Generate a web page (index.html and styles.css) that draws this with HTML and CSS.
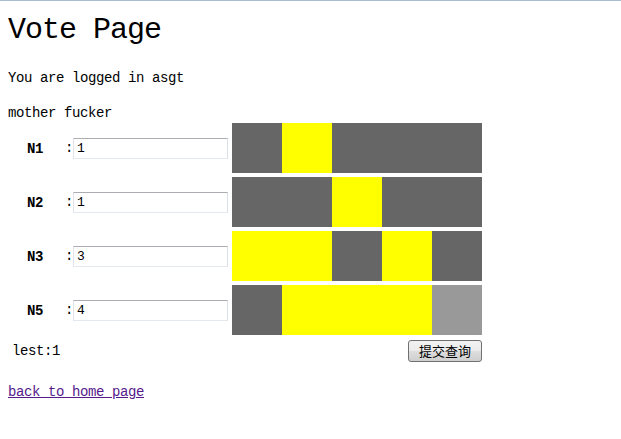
FILE: index.html
```html
<!DOCTYPE html>
<html>
<head>
<meta charset="utf-8">
<title>Vote Page</title>
<link rel="stylesheet" href="styles.css">
</head>
<body>
<h1 class="title">Vote Page</h1>
<p class="line">You are logged in asgt</p>
<p class="line line-last">mother fucker</p>
<form class="vote">
  <div class="row">
    <span class="label">N1</span><span class="colon">:</span><input class="field" type="text" value="1">
    <div class="bar"><i class="seg dark"></i><i class="seg yellow"></i><i class="seg dark"></i><i class="seg dark"></i><i class="seg dark"></i></div>
  </div>
  <div class="row">
    <span class="label">N2</span><span class="colon">:</span><input class="field" type="text" value="1">
    <div class="bar"><i class="seg dark"></i><i class="seg dark"></i><i class="seg yellow"></i><i class="seg dark"></i><i class="seg dark"></i></div>
  </div>
  <div class="row">
    <span class="label">N3</span><span class="colon">:</span><input class="field" type="text" value="3">
    <div class="bar"><i class="seg yellow"></i><i class="seg yellow"></i><i class="seg dark"></i><i class="seg yellow"></i><i class="seg dark"></i></div>
  </div>
  <div class="row">
    <span class="label">N5</span><span class="colon">:</span><input class="field" type="text" value="4">
    <div class="bar"><i class="seg dark"></i><i class="seg yellow"></i><i class="seg yellow"></i><i class="seg yellow"></i><i class="seg light"></i></div>
  </div>
  <div class="foot">
    <span class="lest">lest:1</span>
    <button class="submit" type="button">提交查询</button>
  </div>
</form>
<p class="back"><a class="link" href="#">back to home page</a></p>
</body>
</html>
```
FILE: styles.css
```css
html, body {
  margin: 0;
  padding: 0;
  background: #fff;
}
body {
  border-top: 1px solid #aabcd4;
  padding: 8px;
  font-family: "Liberation Mono", "DejaVu Sans Mono", monospace;
  font-size: 14px;
  letter-spacing: -0.4px;
  color: #000;
}
.title {
  font-family: "Liberation Mono", monospace;
  font-size: 30px;
  letter-spacing: -1px;
  font-weight: normal;
  line-height: 42px;
  margin: 0 0 18px;
}
.line {
  margin: 0 0 16px;
  line-height: 19px;
}
.line-last {
  margin-bottom: 0;
}
.vote {
  display: flex;
  flex-direction: column;
  gap: 4px;
  width: 474px;
  margin: 0;
}
.row {
  display: flex;
  align-items: center;
  height: 50px;
}
.label {
  width: 38px;
  padding-left: 19px;
  padding-top: 2px;
  font-weight: bold;
  font-size: 14px;
}
.colon {
  width: 8px;
  text-align: center;
}
.field {
  box-sizing: border-box;
  width: 155px;
  height: 21px;
  margin: 0;
  padding: 0 3px;
  border: 1px solid #e3e9ef;
  border-top-color: #abadb3;
  border-left-color: #e2e3ea;
  border-right-color: #dbdfe6;
  font-family: "Liberation Mono", monospace;
  font-size: 13px;
  letter-spacing: -0.5px;
  color: #000;
  outline: none;
}
.bar {
  display: flex;
  width: 250px;
  height: 50px;
  margin-left: 4px;
}
.seg {
  width: 50px;
  height: 50px;
}
.dark { background: #666666; }
.yellow { background: #ffff00; }
.light { background: #999999; }
.foot {
  display: flex;
  justify-content: space-between;
  align-items: center;
  height: 24px;
}
.lest {
  padding-left: 4px;
}
.submit {
  box-sizing: border-box;
  width: 74px;
  height: 22px;
  padding: 0;
  border: 1px solid #707070;
  border-radius: 3px;
  background: linear-gradient(#f2f2f2 0%, #ebebeb 50%, #dddddd 51%, #cfcfcf 100%);
  font-family: "Noto Sans CJK SC", sans-serif;
  font-size: 13px;
  letter-spacing: 0;
  line-height: 18px;
  color: #000;
}
.back {
  margin: 20px 0 0;
  line-height: 19px;
}
.link {
  color: #551a8b;
}
```
